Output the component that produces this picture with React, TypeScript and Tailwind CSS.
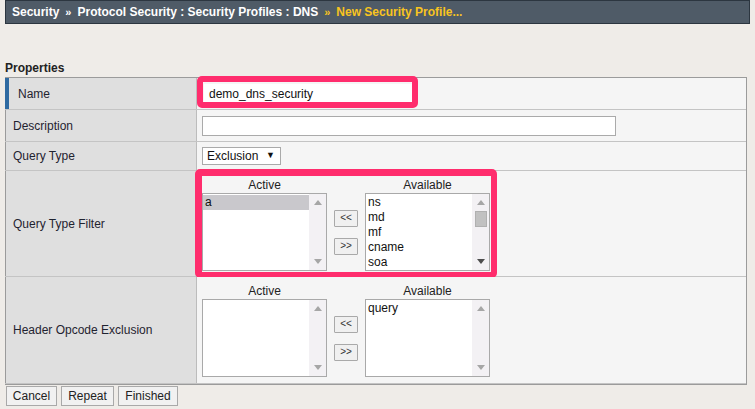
import React from "react";

const font = { fontFamily: '"Liberation Sans", Arial, sans-serif' };

function Arrow({ dir, dark }: { dir: "up" | "down"; dark?: boolean }) {
    const fill = dark ? "#4d4d4d" : "#a6a6a6";
    return (
        <svg width="8" height="5" viewBox="0 0 8 5">
            {dir === "up" ? <polygon points="0,5 8,5 4,0" fill={fill} /> : <polygon points="0,0 8,0 4,5" fill={fill} />}
        </svg>
    );
}

function ListBox({ items, selected, scroll }: { items: string[]; selected?: string; scroll?: boolean }) {
    return (
        <div className="flex w-[125px] h-[78px] border border-[#a9a9a9] bg-white">
            <div className="flex-1 overflow-hidden text-[12px] leading-[15px] text-[#111] pt-[1px]">
                {items.map((it) => (
                    <div key={it} className={"pl-[2px] " + (it === selected ? "bg-[#c9c8cc]" : "")}>{it}</div>
                ))}
            </div>
            <div className="w-[17px] bg-[#f3f1f4] flex flex-col items-center">
                <div className="h-[17px] flex items-center justify-center"><Arrow dir="up" /></div>
                {scroll ? <div className="w-[12px] h-[16px] bg-[#c1c1c1] border border-[#b0b0b0]"></div> : null}
                <div className="flex-1"></div>
                <div className="h-[17px] flex items-center justify-center"><Arrow dir="down" dark={scroll} /></div>
            </div>
        </div>
    );
}

function MoveButtons() {
    return (
        <div className="flex flex-col items-center justify-center gap-[11px] h-[78px] mt-[15px]">
            <button className="w-[24px] h-[17px] border border-[#a9a9a9] bg-[#f0f0f0] text-[10px] leading-none text-[#333] rounded-[1px]">&lt;&lt;</button>
            <button className="w-[24px] h-[17px] border border-[#a9a9a9] bg-[#f0f0f0] text-[10px] leading-none text-[#333] rounded-[1px]">&gt;&gt;</button>
        </div>
    );
}

function Selector({ active, available, selected, scroll }: { active: string[]; available: string[]; selected?: string; scroll?: boolean }) {
    return (
        <div className="flex gap-[7px] pt-[7px]">
            <div className="flex flex-col items-center">
                <div className="h-[15px] leading-[15px] text-[12px] text-[#222]">Active</div>
                <ListBox items={active} selected={selected} />
            </div>
            <MoveButtons />
            <div className="flex flex-col items-center">
                <div className="h-[15px] leading-[15px] text-[12px] text-[#222]">Available</div>
                <ListBox items={available} scroll={scroll} />
            </div>
        </div>
    );
}

function Row({ label, h, first, children }: { label: string; h: string; first?: boolean; children: React.ReactNode }) {
    return (
        <div className={"flex border-b border-[#c4c4c4] " + h}>
            <div className={"w-[192px] shrink-0 flex items-center bg-[#dfdfdf] border-r border-[#bcbcbc] text-[12px] text-[#1f2330] " + (first ? "border-l-4 border-l-[#2f6aa1] pl-[9px]" : "border-l border-l-[#9b9b9b] pl-[7px]")}>
                {label}
            </div>
            <div className="relative flex-1 bg-[#f5f5f5] pl-[5px] flex">{children}</div>
        </div>
    );
}

export default function App() {
    return (
        <div style={font} className="w-[755px] h-[409px] overflow-hidden bg-[#efece8]">
            {/* breadcrumb bar */}
            <div className="mx-[5px] h-[24px] flex items-center border border-[#2c3640] bg-[#4f5b67] px-[6px] text-[12px] font-bold text-white">
                <span>Security</span>
                <span className="px-[6px] text-[11px]">»</span>
                <span>Protocol Security : Security Profiles : DNS</span>
                <span className="px-[6px] text-[11px] text-[#f8c420]">»</span>
                <span className="text-[#f8c420]">New Security Profile...</span>
            </div>

            <div className="mt-[37px] pl-[5px] h-[14px] leading-[14px] text-[12px] font-bold text-[#222]">Properties</div>

            <div className="ml-[5px] mt-[2px] w-[742px] border-t border-r border-b border-t-[#9b9b9b] border-r-[#9b9b9b] border-b-[#9b9b9b]">
                <Row label="Name" h="h-[32px]" first>
                    <div className="flex items-center">
                        <div className="ml-[2px] w-[211px] h-[20px] bg-white flex items-center pl-[5px] text-[12px] text-[#111]">demo_dns_security</div>
                    </div>
                    <div className="absolute left-0 top-[-2px] w-[221px] h-[32px] border-[6px] border-[#ff2d6d] rounded-[5px] pointer-events-none"></div>
                </Row>
                <Row label="Description" h="h-[32px]">
                    <div className="flex items-center">
                        <div className="w-[414px] h-[20px] bg-white border border-[#aaaaaa]"></div>
                    </div>
                </Row>
                <Row label="Query Type" h="h-[29px]">
                    <div className="flex items-center">
                        <div className="w-[79px] h-[18px] bg-white border border-[#aaaaaa] flex items-center pl-[4px] text-[12px] text-[#111]">
                            <span className="flex-1">Exclusion</span>
                            <span className="pr-[5px] text-[9px]">▼</span>
                        </div>
                    </div>
                </Row>
                <Row label="Query Type Filter" h="h-[106px]">
                    <Selector active={["a"]} selected="a" available={["ns", "md", "mf", "cname", "soa"]} scroll />
                    <div className="absolute left-[-2px] top-[-2px] w-[302px] h-[109px] border-t-[7px] border-l-[7px] border-r-[6px] border-b-[6px] border-[#ff2d6d] rounded-[5px] pointer-events-none"></div>
                </Row>
                <Row label="Header Opcode Exclusion" h="h-[107px]">
                    <Selector active={[]} available={["query"]} />
                </Row>
            </div>

            <div className="flex gap-[4px] pl-[6px] mt-[1px]">
                <button className="w-[51px] h-[20px] border border-[#a9a9a9] bg-[#f1f1f1] text-[12px] text-[#222]">Cancel</button>
                <button className="w-[53px] h-[20px] border border-[#a9a9a9] bg-[#f1f1f1] text-[12px] text-[#222]">Repeat</button>
                <button className="w-[60px] h-[20px] border border-[#a9a9a9] bg-[#f1f1f1] text-[12px] text-[#222]">Finished</button>
            </div>
        </div>
    );
}
